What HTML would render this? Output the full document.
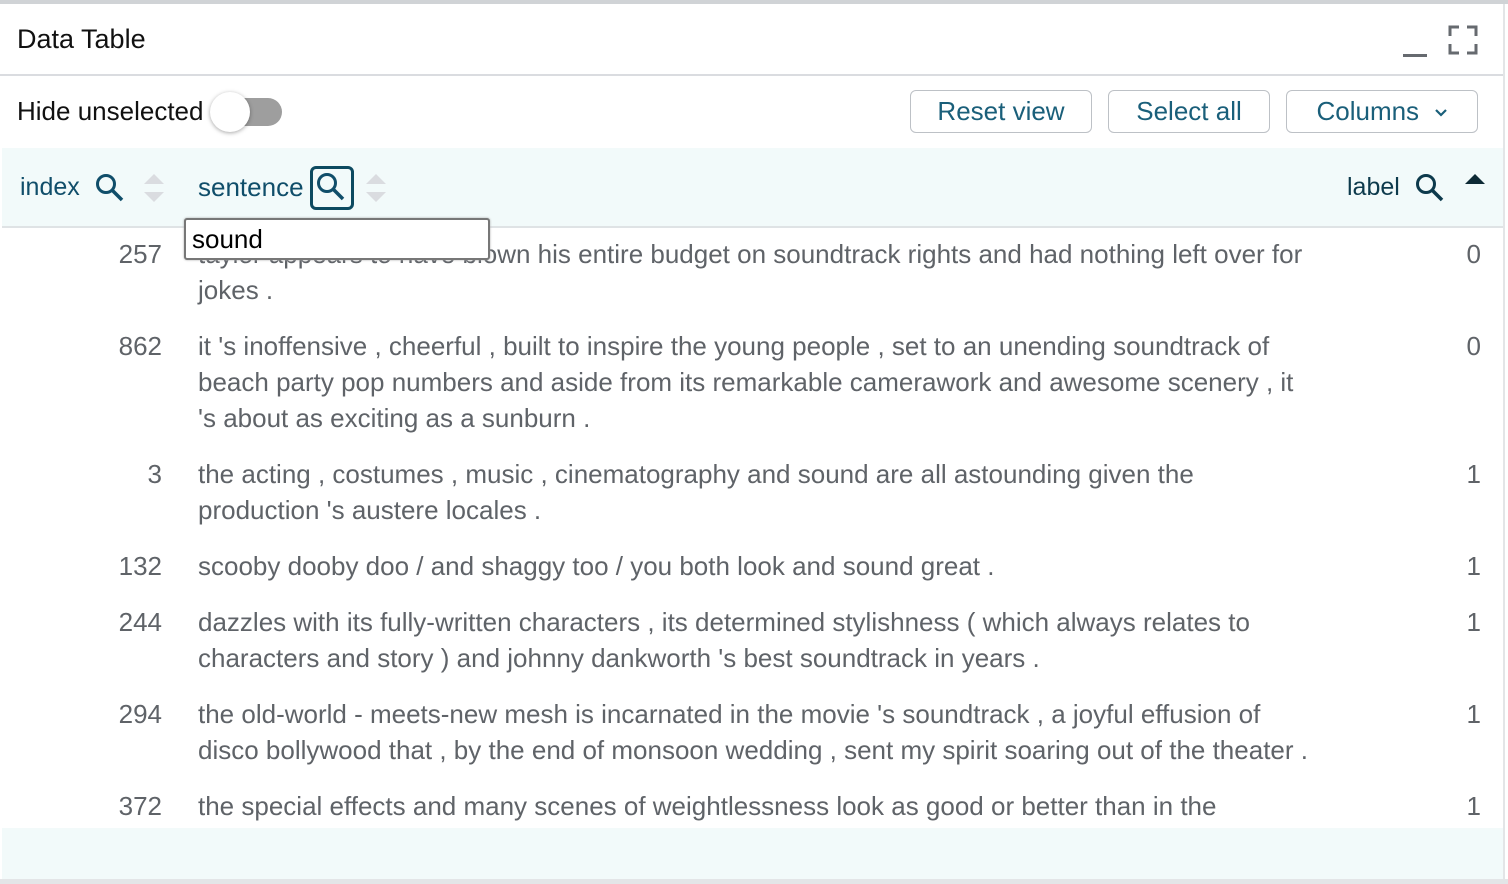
<!DOCTYPE html>
<html><head><meta charset="utf-8"><style>
*{margin:0;padding:0;box-sizing:border-box}
body{width:1508px;height:884px;background:#fff;font-family:"Liberation Sans",sans-serif;position:relative;overflow:hidden}
.a{position:absolute;white-space:nowrap}
.t{position:absolute;white-space:nowrap;font-size:26px;color:#5f6368;line-height:36px;margin-top:-2px}
.n{position:absolute;font-size:26px;color:#5f6368;line-height:36px;text-align:right;width:80px;margin-top:-2px}
.btn{position:absolute;top:90px;height:43px;border:1.5px solid #bdc1c6;border-radius:6px;color:#1a5f7a;font-size:26px;line-height:40px;text-align:center}
.h{position:absolute;font-size:25px;color:#104e6a;line-height:36px;top:169px}
</style></head><body>
<div class="a" style="left:0;top:0;width:1508px;height:4px;background:#d0d3d6"></div>
<div class="a" style="left:1503px;top:4px;width:2px;height:880px;background:#e3e5e7"></div>
<div class="a" style="left:17px;top:24px;font-size:27px;color:#111">Data Table</div>
<div class="a" style="left:1403px;top:54px;width:24px;height:3px;background:#666a6f"></div>
<svg class="a" style="left:1448px;top:25px" width="30" height="30" viewBox="0 0 30 30"><path d="M2 11V2h9M19 2h9v9M28 19v9h-9M11 28H2v-9" fill="none" stroke="#666a6f" stroke-width="3"/></svg>
<div class="a" style="left:0;top:74px;width:1503px;height:2px;background:#dadce0"></div>
<div class="a" style="left:17px;top:96px;font-size:26px;color:#111">Hide unselected</div>
<div class="a" style="left:216px;top:98px;width:66px;height:28px;border-radius:14px;background:#9e9e9e"></div>
<div class="a" style="left:210px;top:92px;width:40px;height:40px;border-radius:50%;background:#fff;box-shadow:0 1px 4px rgba(0,0,0,.35)"></div>
<div class="btn" style="left:910px;width:182px">Reset view</div>
<div class="btn" style="left:1108px;width:162px">Select all</div>
<div class="btn" style="left:1286px;width:192px">Columns &nbsp;<svg width="14" height="10" viewBox="0 0 14 10" style="vertical-align:middle"><path d="M2 2l5 5 5-5" fill="none" stroke="#1a5f7a" stroke-width="2.2"/></svg></div>
<div class="a" style="left:2px;top:148px;width:1501px;height:78px;background:#f2fafa"></div>
<div class="a" style="left:2px;top:226px;width:1501px;height:2px;background:#dfe3e5"></div>
<div class="h" style="left:20px">index</div>
<svg class="a" style="left:94px;top:172px" width="32" height="32" viewBox="0 0 32 32"><circle cx="12" cy="12" r="8.5" fill="none" stroke="#104e6a" stroke-width="3"/><path d="M18 18l10 10" stroke="#104e6a" stroke-width="3.5"/></svg>
<svg class="a" style="left:143px;top:173px" width="22" height="30"><path d="M1 11L11 1 21 11z M1 19h20L11 29z" fill="#dadce0"/></svg>
<div class="h" style="left:198px;font-size:26px">sentence</div>
<div class="a" style="left:310px;top:166px;width:44px;height:44px;border:3px solid #0d4a60;border-radius:6px"></div>
<svg class="a" style="left:315px;top:171px" width="32" height="32" viewBox="0 0 32 32"><circle cx="12" cy="12" r="8.5" fill="none" stroke="#104e6a" stroke-width="3"/><path d="M18 18l10 10" stroke="#104e6a" stroke-width="3.5"/></svg>
<svg class="a" style="left:365px;top:173px" width="22" height="30"><path d="M1 11L11 1 21 11z M1 19h20L11 29z" fill="#dadce0"/></svg>
<div class="h" style="left:1347px;color:#0d3a4c">label</div>
<svg class="a" style="left:1414px;top:172px" width="32" height="32" viewBox="0 0 32 32"><circle cx="12" cy="12" r="8.5" fill="none" stroke="#0d3a4c" stroke-width="3"/><path d="M18 18l10 10" stroke="#0d3a4c" stroke-width="3.5"/></svg>
<svg class="a" style="left:1464px;top:173px" width="22" height="12"><path d="M1 11L11 1 21 11z" fill="#0d2a35"/></svg>

<div class="n" style="left:82px;top:238px">257</div>
<div class="t" style="left:198px;top:238px">taylor appears to have blown his entire budget on soundtrack rights and had nothing left over for</div>
<div class="t" style="left:198px;top:274px">jokes .</div>
<div class="n" style="left:1401px;top:238px">0</div>

<div class="n" style="left:82px;top:330px">862</div>
<div class="t" style="left:198px;top:330px">it 's inoffensive , cheerful , built to inspire the young people , set to an unending soundtrack of</div>
<div class="t" style="left:198px;top:366px">beach party pop numbers and aside from its remarkable camerawork and awesome scenery , it</div>
<div class="t" style="left:198px;top:402px">'s about as exciting as a sunburn .</div>
<div class="n" style="left:1401px;top:330px">0</div>

<div class="n" style="left:82px;top:458px">3</div>
<div class="t" style="left:198px;top:458px">the acting , costumes , music , cinematography and sound are all astounding given the</div>
<div class="t" style="left:198px;top:494px">production 's austere locales .</div>
<div class="n" style="left:1401px;top:458px">1</div>

<div class="n" style="left:82px;top:550px">132</div>
<div class="t" style="left:198px;top:550px">scooby dooby doo / and shaggy too / you both look and sound great .</div>
<div class="n" style="left:1401px;top:550px">1</div>

<div class="n" style="left:82px;top:606px">244</div>
<div class="t" style="left:198px;top:606px">dazzles with its fully-written characters , its determined stylishness ( which always relates to</div>
<div class="t" style="left:198px;top:642px">characters and story ) and johnny dankworth 's best soundtrack in years .</div>
<div class="n" style="left:1401px;top:606px">1</div>

<div class="n" style="left:82px;top:698px">294</div>
<div class="t" style="left:198px;top:698px">the old-world - meets-new mesh is incarnated in the movie 's soundtrack , a joyful effusion of</div>
<div class="t" style="left:198px;top:734px">disco bollywood that , by the end of monsoon wedding , sent my spirit soaring out of the theater .</div>
<div class="n" style="left:1401px;top:698px">1</div>

<div class="n" style="left:82px;top:790px">372</div>
<div class="t" style="left:198px;top:790px">the special effects and many scenes of weightlessness look as good or better than in the</div>
<div class="n" style="left:1401px;top:790px">1</div>

<div class="a" style="left:2px;top:828px;width:1501px;height:52px;background:#f2fafa"></div>
<div class="a" style="left:0;top:879px;width:1508px;height:5px;background:#e3e5e7"></div>

<div class="a" style="left:184px;top:218px;width:306px;height:42px;background:#fff;border:2px solid #777;border-radius:3px;box-shadow:0 0 2px #aaa"></div>
<div class="a" style="left:192px;top:224px;font-size:26px;color:#000">sound</div>
</body></html>
